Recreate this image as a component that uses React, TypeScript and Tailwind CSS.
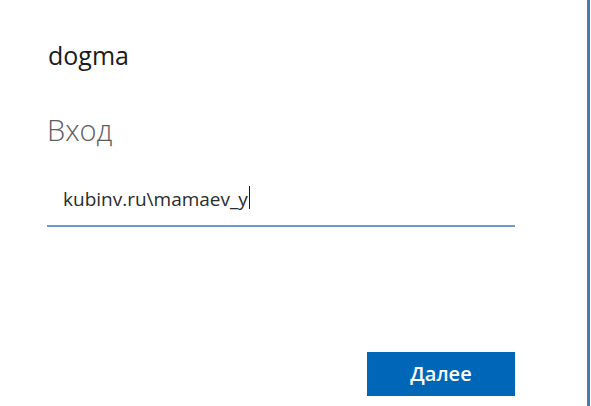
import React from 'react';

const font = { fontFamily: '"Open Sans", "Noto Sans", sans-serif' };

export default function App() {
  return (
    <div className="h-[406px] w-[591px] overflow-hidden bg-white" style={font}>
      <div className="flex h-full w-[590px] flex-col border-r-[3px] border-[#4b79ad] pl-[47px]">
        <div className="ml-[1px] mt-[40px] text-[25px] leading-[30px] text-[#1b1b1b]">dogma</div>
        <div className="mt-[42px] text-[29px] font-light leading-[36px] text-[#5e5e5e]">Вход</div>
        <div className="mt-[31px] flex h-[48px] w-[468px] items-start border-b-2 border-[#6d9bc5] pl-[16px] pt-[7px] text-[19px] text-[#2b2b2b]">
          <span className="leading-[26px]">kubinv.ru\mamaev_y</span>
          <span className="ml-px h-[23px] w-px bg-[#1b1b1b]" />
        </div>
        <div className="mt-auto mb-[10px] flex w-[468px] justify-end">
          <button className="h-[44px] w-[148px] bg-[#0067b8] text-[20px] font-semibold text-white">
            Далее
          </button>
        </div>
      </div>
    </div>
  );
}
